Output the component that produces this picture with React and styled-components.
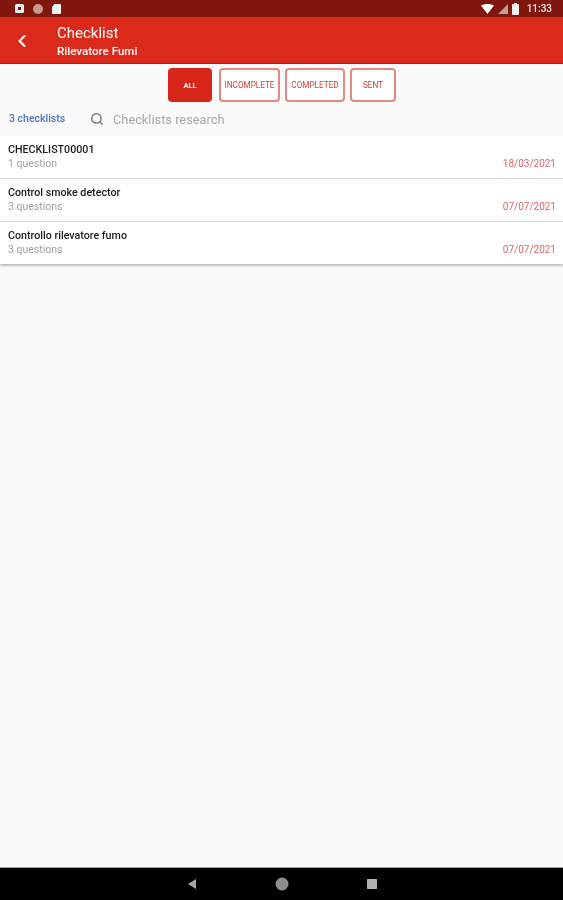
import React from 'react';
import styled, { createGlobalStyle } from 'styled-components';
import { Search, ChevronLeft } from 'lucide-react';

const GlobalStyle = createGlobalStyle`
  html, body { margin: 0; padding: 0; height: 100%; }
  body { font-family: Roboto, "Liberation Sans", sans-serif; background: #fafafa; }
  #root { height: 100%; }
`;

const Screen = styled.div`
  display: flex;
  flex-direction: column;
  width: 563px;
  height: 900px;
  overflow: hidden;
  background: #fafafa;
  filter: blur(0.4px);
`;

const StatusBar = styled.div`
  display: flex;
  align-items: center;
  justify-content: space-between;
  height: 17px;
  padding: 0 11px 0 15px;
  background: #7f170f;
  color: #f4e8e6;
`;

const StatusGroup = styled.div`
  display: flex;
  align-items: center;
  gap: ${props => props.gap || 5}px;
`;

const Clock = styled.span`
  margin-left: 4px;
  font-size: 10px;
  font-weight: 500;
`;

const AppBar = styled.header`
  display: flex;
  align-items: center;
  height: 44px;
  padding-top: 2px;
  box-sizing: content-box;
  background: #db2a1b;
  border-bottom: 1px solid #d80f06;
  color: #fff;
`;

const BackButton = styled.div`
  display: flex;
  justify-content: center;
  width: 44px;
  margin-right: 13px;
`;

const Titles = styled.div`
  display: flex;
  flex-direction: column;
  gap: 3px;
`;

const Title = styled.div`
  font-size: 15px;
  line-height: 17px;
`;

const Subtitle = styled.div`
  font-size: 11.6px;
  line-height: 13px;
  font-weight: 500;
`;

const Filters = styled.div`
  display: flex;
  justify-content: center;
  gap: 5px;
  padding: 4px 0 0 1px;
`;

const FilterButton = styled.div`
  display: flex;
  align-items: center;
  justify-content: center;
  box-sizing: border-box;
  width: ${props => props.width}px;
  height: 34px;
  margin-right: ${props => (props.active ? 2 : 0)}px;
  border-radius: 4px;
  border: 2px solid ${props => (props.active ? '#d9261b' : '#e08a84')};
  background: ${props => (props.active ? '#d9261b' : '#fff')};
  color: ${props => (props.active ? '#fff' : '#d3413a')};
  font-size: ${props => (props.active ? 7.5 : 8.2)}px;
  font-weight: ${props => (props.active ? 700 : 400)};
`;

const MetaRow = styled.div`
  display: flex;
  align-items: center;
  height: 24px;
  padding: 5px 0 5px 9px;
`;

const Count = styled.div`
  width: 81px;
  margin-top: -2px;
  color: #4a76c4;
  font-size: 10.5px;
  font-weight: 500;
`;

const SearchLabel = styled.div`
  margin-left: 9px;
  color: #a8a8a8;
  font-size: 12.8px;
`;

const List = styled.div`
  display: flex;
  flex-direction: column;
  gap: 1px;
  background: #dcdcdc;
  box-shadow: 0 2px 2px rgba(0, 0, 0, 0.25);
`;

const Row = styled.div`
  display: flex;
  justify-content: space-between;
  align-items: flex-end;
  height: 42px;
  padding: 0 7px 8px 8px;
  box-sizing: border-box;
  background: #fff;
`;

const RowName = styled.div`
  margin-bottom: 2px;
  color: #1c1c1c;
  font-size: 10.7px;
  font-weight: 500;
  line-height: 13px;
`;

const RowCount = styled.div`
  color: #a2a2a2;
  font-size: 10.5px;
  line-height: 12px;
`;

const RowDate = styled.div`
  color: #d9666a;
  font-size: 10px;
  line-height: 12px;
`;

const Spacer = styled.div`
  flex: 1;
`;

const NavBar = styled.nav`
  display: flex;
  align-items: center;
  justify-content: center;
  gap: 78px;
  height: 33px;
  border-top: 1px solid #a0a0a0;
  box-sizing: border-box;
  background: #000;
`;

const checklists = [
  { name: 'CHECKLIST00001', count: '1 question', date: '18/03/2021' },
  { name: 'Control smoke detector', count: '3 questions', date: '07/07/2021' },
  { name: 'Controllo rilevatore fumo', count: '3 questions', date: '07/07/2021' },
];

const filters = [
  { label: 'ALL', width: 44, active: true },
  { label: 'INCOMPLETE', width: 61 },
  { label: 'COMPLETED', width: 60 },
  { label: 'SENT', width: 46 },
];

const App = () => (
  <Screen>
    <GlobalStyle />
    <StatusBar>
      <StatusGroup gap={9}>
        <svg width="9" height="9" viewBox="0 0 9 9"><rect width="9" height="9" rx="1.5" fill="#f2f2f2" /><rect x="3" y="3" width="3" height="3" fill="#7f170f" /></svg>
        <svg width="10" height="10" viewBox="0 0 10 10"><circle cx="5" cy="5" r="5" fill="#c89a94" /></svg>
        <svg width="9" height="10" viewBox="0 0 9 10"><path d="M2.5 0H8a1 1 0 0 1 1 1v8a1 1 0 0 1-1 1H1a1 1 0 0 1-1-1V3z" fill="#f7f2f1" /></svg>
      </StatusGroup>
      <StatusGroup gap={4}>
        <svg width="13" height="10" viewBox="0 0 13 10"><path d="M0 1.500C3.800-.5 9.200-.5 13 1.500L6.500 10z" fill="#fff" /></svg>
        <svg width="10" height="10" viewBox="0 0 10 10"><path d="M10 0v10H0z" fill="#b9a09c" /></svg>
        <svg width="7" height="12" viewBox="0 0 7 12"><path d="M2 1V0h3v1h1a1 1 0 0 1 1 1v9a1 1 0 0 1-1 1H1a1 1 0 0 1-1-1V2a1 1 0 0 1 1-1z" fill="#f7f2f1" /></svg>
        <Clock>11:33</Clock>
      </StatusGroup>
    </StatusBar>
    <AppBar>
      <BackButton><ChevronLeft size={20} strokeWidth={2.5} /></BackButton>
      <Titles>
        <Title>Checklist</Title>
        <Subtitle>Rilevatore Fumi</Subtitle>
      </Titles>
    </AppBar>
    <Filters>
      {filters.map(f => (
        <FilterButton key={f.label} width={f.width} active={f.active}>{f.label}</FilterButton>
      ))}
    </Filters>
    <MetaRow>
      <Count>3 checklists</Count>
      <Search size={14} color="#777" strokeWidth={2.4} />
      <SearchLabel>Checklists research</SearchLabel>
    </MetaRow>
    <List>
      {checklists.map(item => (
        <Row key={item.name}>
          <div>
            <RowName>{item.name}</RowName>
            <RowCount>{item.count}</RowCount>
          </div>
          <RowDate>{item.date}</RowDate>
        </Row>
      ))}
    </List>
    <Spacer />
    <NavBar>
      <svg width="10" height="10" viewBox="0 0 10 10"><path d="M9 0v10L1 5z" fill="#a5a5a5" /></svg>
      <svg width="14" height="14" viewBox="0 0 14 14"><circle cx="7" cy="7" r="6.500" fill="#8e8e8e" /></svg>
      <svg width="10" height="10" viewBox="0 0 10 10"><rect width="10" height="10" fill="#b0b0b0" /></svg>
    </NavBar>
  </Screen>
);

export default App;
